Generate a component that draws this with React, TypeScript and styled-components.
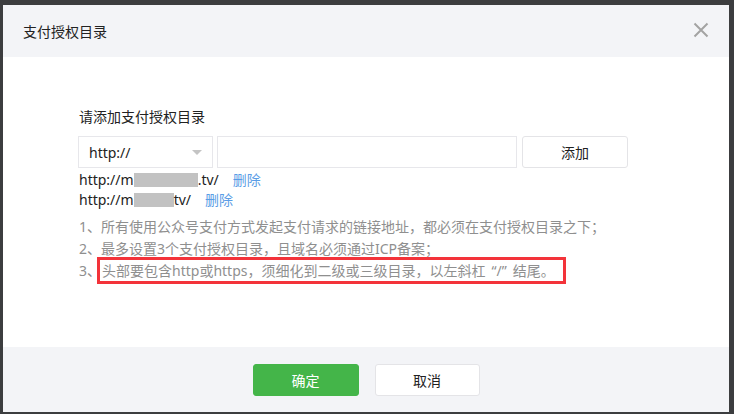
import React from 'react'
import styled, { createGlobalStyle } from 'styled-components'

const GlobalStyle = createGlobalStyle`
  html, body {
    margin: 0;
    padding: 0;
    background: #3c3d3f;
  }
  body {
    font-family: 'Noto Sans', 'Noto Sans CJK SC', sans-serif;
    font-size: 14px;
    color: #222;
  }
  * {
    box-sizing: border-box;
  }
`

const Page = styled.div`
  width: 734px;
  height: 414px;
  padding: 5px 5px 2px 3px;
  overflow: hidden;
`

const Dialog = styled.div`
  width: 726px;
  height: 407px;
  background: #fff;
  display: flex;
  flex-direction: column;
`

const Header = styled.div`
  height: 52px;
  flex-shrink: 0;
  background: #f3f4f7;
  display: flex;
  align-items: center;
  justify-content: space-between;
  padding: 0 20px;
`

const Title = styled.div`
  font-size: 14px;
  color: #222;
`

const CloseButton = styled.button`
  width: 16px;
  height: 16px;
  padding: 0;
  border: 0;
  background: none;
  display: flex;
  margin-top: -2px;
  cursor: pointer;
`

const Body = styled.div`
  flex: 1;
  padding: 50px 0 0 75px;
`

const Label = styled.div`
  line-height: 20px;
  margin-bottom: 9px;
  padding-left: 1px;
`

const FormRow = styled.div`
  display: flex;
  align-items: center;
  height: 32px;
`

const Select = styled.div`
  width: 135px;
  height: 32px;
  border: 1px solid #e7e7eb;
  display: flex;
  align-items: center;
  justify-content: space-between;
  padding: 0 10px 0 10px;
  color: #222;
`

const Caret = styled.span`
  width: 0;
  height: 0;
  border-left: 5px solid transparent;
  border-right: 5px solid transparent;
  border-top: 5px solid #c4c4c4;
`

const TextInput = styled.input`
  width: 300px;
  height: 32px;
  margin-left: 4px;
  border: 1px solid #e7e7eb;
  outline: none;
  font: inherit;
  padding: 0 8px;
`

const Button = styled.button<{ $primary?: boolean }>`
  width: ${p => (p.$primary ? '106px' : '105px')};
  height: 32px;
  border-radius: 3px;
  font-family: inherit;
  font-size: 14px;
  cursor: pointer;
  border: 1px solid ${p => (p.$primary ? '#44b549' : '#e4e4e7')};
  background: ${p => (p.$primary ? '#44b549' : '#fff')};
  color: ${p => (p.$primary ? '#fff' : '#222')};
`

const AddButton = styled(Button)`
  width: 106px;
  margin-left: 5px;
`

const UrlList = styled.div`
  margin-top: 2px;
  padding-left: 1px;
`

const UrlRow = styled.div`
  display: flex;
  align-items: center;
  line-height: 20px;
  height: 20px;
`

const Masked = styled.span<{ $w: number }>`
  display: inline-block;
  width: ${p => p.$w}px;
  height: 14px;
  background: #c2c2c2;
`

const DeleteLink = styled.a`
  color: #5a9de6;
  margin-left: 14px;
  cursor: pointer;
`

const Notes = styled.ol`
  list-style: none;
  margin: 6px 0 0;
  padding: 0 0 0 1px;
  color: #8f8f8f;
  line-height: 22px;
`

const Note = styled.li`
  white-space: nowrap;
`

const Quoted = styled.span`
  padding: 0 6px;
`

const Highlight = styled.span`
  position: relative;
  display: inline-block;
  margin-left: 1px;

  &::after {
    content: '';
    position: absolute;
    top: -3px;
    bottom: -2px;
    left: -5px;
    right: -11px;
    border: 3px solid #f3333a;
  }
`

const Footer = styled.div`
  height: 65px;
  flex-shrink: 0;
  background: #f3f4f7;
  display: flex;
  justify-content: center;
  align-items: flex-start;
  gap: 16px;
  padding-top: 17px;
`

const App = () => {
  return (
    <>
      <GlobalStyle />
      <Page>
        <Dialog>
          <Header>
            <Title>支付授权目录</Title>
            <CloseButton aria-label="关闭">
              <svg width="16" height="16" viewBox="0 0 16 16">
                <path d="M1.5 1.5 L14.5 14.5 M14.5 1.5 L1.5 14.5" stroke="#a3a3a3" strokeWidth="2" />
              </svg>
            </CloseButton>
          </Header>
          <Body>
            <Label>请添加支付授权目录</Label>
            <FormRow>
              <Select>
                <span>http://</span>
                <Caret />
              </Select>
              <TextInput />
              <AddButton>添加</AddButton>
            </FormRow>
            <UrlList>
              <UrlRow>
                http://m<Masked $w={64} />.tv/
                <DeleteLink>删除</DeleteLink>
              </UrlRow>
              <UrlRow>
                http://m<Masked $w={40} />tv/
                <DeleteLink>删除</DeleteLink>
              </UrlRow>
            </UrlList>
            <Notes>
              <Note>1、所有使用公众号支付方式发起支付请求的链接地址，都必须在支付授权目录之下；</Note>
              <Note>2、最多设置3个支付授权目录，且域名必须通过ICP备案；</Note>
              <Note>
                3、
                <Highlight>
                  头部要包含http或https，须细化到二级或三级目录，以左斜杠<Quoted>“/”</Quoted>结尾。
                </Highlight>
              </Note>
            </Notes>
          </Body>
          <Footer>
            <Button $primary>确定</Button>
            <Button>取消</Button>
          </Footer>
        </Dialog>
      </Page>
    </>
  )
}

export default App
